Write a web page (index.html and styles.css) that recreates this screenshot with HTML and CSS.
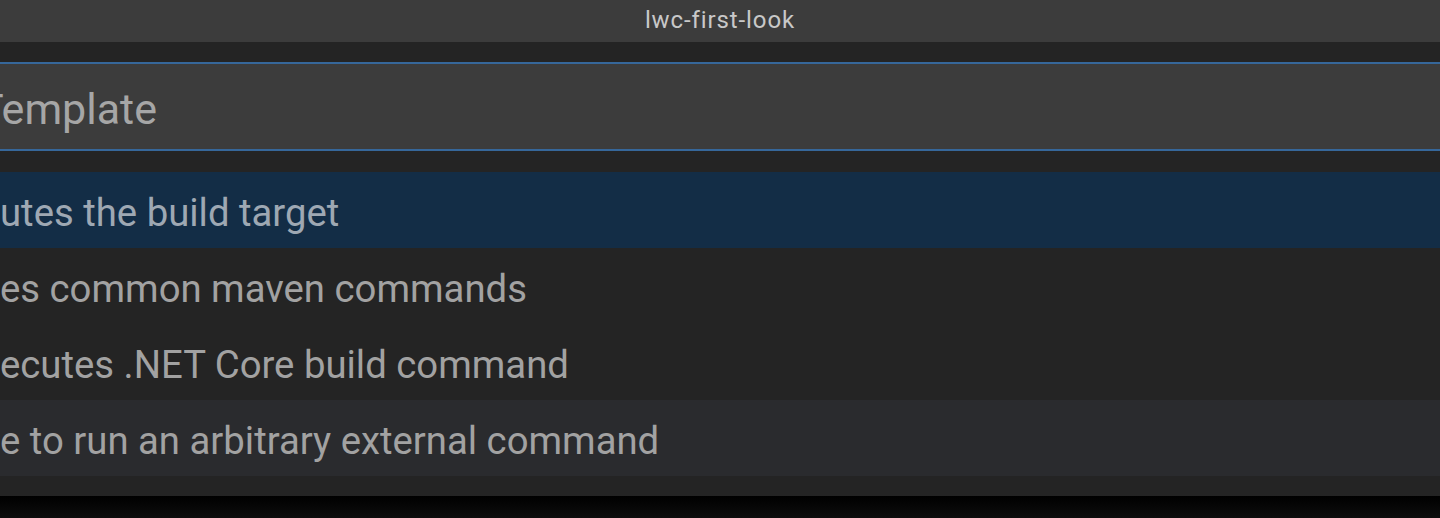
FILE: index.html
```html
<!DOCTYPE html>
<html lang="en">
<head>
<meta charset="utf-8">
<title>lwc-first-look</title>
<link rel="stylesheet" href="styles.css">
</head>
<body>
<div class="window">
  <header class="titlebar">lwc-first-look</header>
  <section class="quickpick">
    <div class="qp-input"><span class="qp-value">Template</span></div>
    <ul class="qp-list">
      <li class="qp-item selected">utes the build target</li>
      <li class="qp-item">es common maven commands</li>
      <li class="qp-item">ecutes .NET Core build command</li>
      <li class="qp-item hover">e to run an arbitrary external command</li>
    </ul>
  </section>
  <div class="backdrop"></div>
</div>
</body>
</html>
```

FILE: styles.css
```css
html, body {
  margin: 0;
  padding: 0;
  background: #000;
}

.window {
  width: 1440px;
  height: 518px;
  overflow: hidden;
  display: flex;
  flex-direction: column;
  font-family: Roboto, "Liberation Sans", sans-serif;
}

.titlebar {
  height: 42px;
  flex: none;
  background: #3c3c3c;
  color: #c8c8c8;
  font-size: 24px;
  letter-spacing: 0.9px;
  line-height: 40px;
  text-align: center;
}

.quickpick {
  flex: none;
  background: #242424;
  padding: 20px 0 20px 0;
  display: flex;
  flex-direction: column;
  gap: 21px;
}

.qp-input {
  height: 85px;
  background: #3c3c3c;
  border-top: 2px solid #36679a;
  border-bottom: 2px solid #36679a;
  overflow: hidden;
  display: flex;
  align-items: center;
}

.qp-value {
  font-size: 43px;
  color: #a6a6a6;
  margin-left: -22px;
  padding-top: 4px;
  white-space: nowrap;
}

.qp-list {
  list-style: none;
  margin: 0;
  padding: 0;
}

.qp-item {
  height: 76px;
  line-height: 76px;
  padding-top: 3px;
  box-sizing: border-box;
  font-size: 38.3px;
  color: #a2a2a2;
  white-space: nowrap;
  overflow: hidden;
}

.qp-item.selected {
  background: #132d46;
  color: #9ea8b3;
}

.qp-item.hover {
  background: #2a2b2e;
}

.backdrop {
  flex: 1;
  background: linear-gradient(#000 0%, #0d0d0d 100%);
}
```
